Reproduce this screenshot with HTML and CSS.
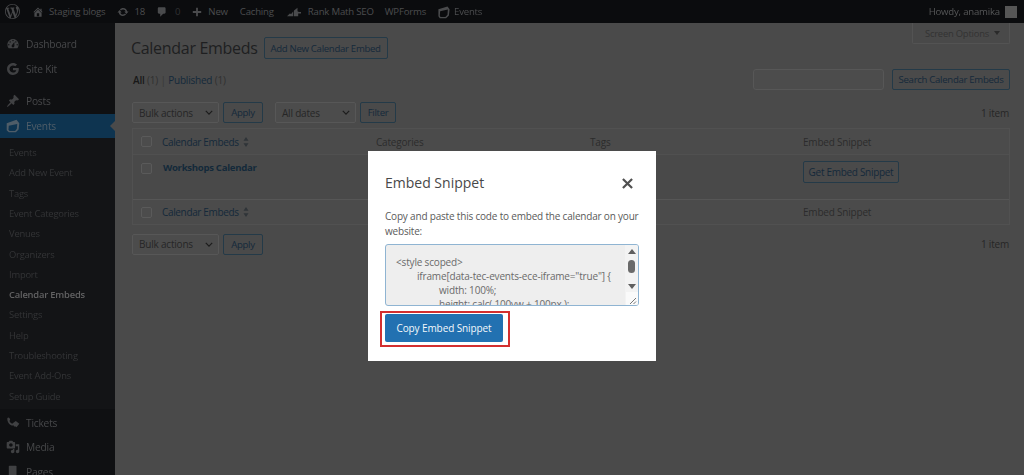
FILE: index.html
```html
<!DOCTYPE html>
<html lang="en">
<head>
<meta charset="utf-8">
<title>Calendar Embeds</title>
<link rel="stylesheet" href="styles.css">
</head>
<body>
<div class="page">
  <header class="adminbar">
    <div class="bar-left">
      <svg class="ab-logo" viewBox="0 0 20 20"><path d="M20 10c0-5.51-4.49-10-10-10C4.48 0 0 4.49 0 10c0 5.52 4.48 10 10 10 5.51 0 10-4.48 10-10zM7.78 15.37L4.37 6.22c.55-.02 1.17-.08 1.17-.08.5-.06.44-1.13-.06-1.11 0 0-1.45.11-2.37.11-.18 0-.37 0-.58-.01C4.12 2.69 6.87 1.11 10 1.11c2.33 0 4.45.87 6.05 2.34-.68-.11-1.65.39-1.65 1.58 0 .74.45 1.36.9 2.1.35.61.55 1.36.55 2.46 0 1.49-1.4 5-1.4 5l-3.03-8.37c.54-.02.82-.17.82-.17.5-.05.44-1.25-.06-1.22 0 0-1.44.12-2.38.12-.87 0-2.33-.12-2.33-.12-.5-.03-.56 1.2-.06 1.22l.92.08 1.26 3.41zM17.41 10c.24-.64.74-1.87.43-4.25.7 1.29 1.05 2.71 1.05 4.25 0 3.29-1.73 6.24-4.4 7.78.97-2.59 1.94-5.2 2.92-7.78zM6.1 18.09C3.12 16.65 1.11 13.53 1.11 10c0-1.3.23-2.48.72-3.59C3.25 10.3 4.67 14.2 6.1 18.09zm4.03-6.63l2.58 6.98c-.86.29-1.76.45-2.71.45-.79 0-1.57-.11-2.29-.33.81-2.38 1.62-4.74 2.42-7.1z"/></svg>
      <span class="ab-item ab-home"><svg class="ab-icon" viewBox="0 0 20 20"><path d="M16 8.5l1.53 1.53-1.06 1.06L10 4.62l-6.47 6.47-1.06-1.06L10 2.5l4 4v-2h2v4zm-6-2.46l6 5.99V18H4v-5.97zM12 17v-5H8v5h4z"/></svg>Staging blogs</span>
      <span class="ab-item ab-updates"><svg class="ab-icon" viewBox="0 0 20 20"><path d="M10.2 3.28c3.53 0 6.43 2.61 6.92 6h2.08l-3.5 4-3.5-4h2.32c-.45-1.97-2.21-3.45-4.32-3.45-1.45 0-2.73.71-3.54 1.78L4.95 5.66C6.23 4.2 8.11 3.28 10.2 3.28zm-.4 13.44c-3.52 0-6.43-2.61-6.92-6H.8l3.5-4c1.17 1.33 2.33 2.67 3.5 4H5.48c.45 1.97 2.21 3.45 4.32 3.45 1.45 0 2.73-.71 3.54-1.78l1.71 1.95c-1.28 1.46-3.15 2.38-5.25 2.38z"/></svg>18</span>
      <span class="ab-item ab-comments"><svg class="ab-icon" viewBox="0 0 20 20"><path d="M5 2h9c1.1 0 2 .9 2 2v7c0 1.1-.9 2-2 2h-2l-5 5v-5H5c-1.1 0-2-.9-2-2V4c0-1.1.9-2 2-2z"/></svg><span class="ab-dim">0</span></span>
      <span class="ab-item ab-new"><svg class="ab-icon" viewBox="0 0 20 20"><path d="M17 8.500v3h-5.500V17h-3v-5.500H3v-3h5.500V3h3v5.500z"/></svg>New</span>
      <span class="ab-item ab-caching">Caching</span>
      <span class="ab-item ab-rank"><svg class="ab-icon ab-icon-rank" viewBox="0 0 20 14"><path d="M0 13l4-4 2 1 3-4v7zM10 13V5l5-4v5l2 1h3v2h-4v4z"/></svg>Rank Math SEO</span>
      <span class="ab-item ab-wpforms">WPForms</span>
      <span class="ab-item ab-events"><svg class="ab-icon ab-icon-events" viewBox="0 0 20 20"><path fill-rule="evenodd" d="M2 6l13-4 3 4-1 9-4 4-9 0-2-3zM4.500 9l-.5 6.500 1 1.500 7 0 3-3 .5-7.500z"/></svg>Events</span>
    </div>
    <div class="bar-right">Howdy, anamika<span class="avatar"></span></div>
  </header>

  <div class="shell">
    <nav class="sidebar">
      <ul class="menu menu-top">
        <li class="m-item"><svg class="m-icon" viewBox="0 0 20 20"><path d="M3.76 16h12.48c1.1-1.37 1.76-3.11 1.76-5 0-4.42-3.58-8-8-8s-8 3.58-8 8c0 1.89.66 3.63 1.76 5zM10 4c.55 0 1 .45 1 1s-.45 1-1 1-1-.45-1-1 .45-1 1-1zM6 6c.55 0 1 .45 1 1s-.45 1-1 1-1-.45-1-1 .45-1 1-1zm8 0c.55 0 1 .45 1 1s-.45 1-1 1-1-.45-1-1 .45-1 1-1zm-5.370 5.550L12 7v6c0 1.100-.9 2-2 2s-2-.9-2-2c0-.57.24-1.080.63-1.450zM4 10c.55 0 1 .45 1 1s-.45 1-1 1-1-.45-1-1 .45-1 1-1zm12 0c.55 0 1 .45 1 1s-.45 1-1 1-1-.45-1-1 .45-1 1-1z"/></svg>Dashboard</li>
        <li class="m-item"><svg class="m-icon" viewBox="0 0 20 20"><path d="M18.300 10.200c0-.6-.05-1.200-.15-1.700H10v3.250h4.700c-.2 1.050-.8 2-1.700 2.600v2.150h2.750c1.600-1.500 2.550-3.650 2.550-6.300zM10 18.500c2.300 0 4.200-.75 5.750-2.050L13 14.350c-.75.5-1.750.8-3 .8-2.250 0-4.150-1.500-4.800-3.550H2.300v2.200C3.700 16.600 6.650 18.500 10 18.500zM5.200 11.600c-.35-1-.35-2.150 0-3.200V6.200H2.300c-1.150 2.350-1.150 5.250 0 7.600zM10 4.850c1.250 0 2.400.45 3.300 1.300l2.450-2.450C14.300 2.300 12.250 1.500 10 1.500 6.650 1.500 3.700 3.400 2.300 6.200l2.900 2.200C5.850 6.350 7.750 4.850 10 4.850z"/></svg>Site Kit</li>
      </ul>
      <ul class="menu menu-second">
        <li class="m-item"><svg class="m-icon" viewBox="0 0 20 20"><path d="M10.440 3.020l1.820-1.820 6.360 6.350-1.830 1.820c-1.050-.68-2.480-.57-3.410.36l-.75.75c-.92.93-1.040 2.350-.35 3.410l-1.830 1.820-2.410-2.410-2.800 2.790c-.42.42-3.380 2.710-3.800 2.290s1.860-3.390 2.280-3.810l2.790-2.790L4.100 9.360l1.830-1.820c1.050.69 2.480.57 3.400-.36l.75-.75c.93-.92 1.050-2.350.36-3.410z"/></svg>Posts</li>
        <li class="m-item m-current"><svg class="m-icon" viewBox="0 0 20 20"><path fill-rule="evenodd" d="M1 6l14-5 4 5-1 9-4 4-10 0-3-3zM4 9.500l-.5 6 1.500 1.500 8 0 2.500-3 .5-7z"/></svg>Events</li>
      </ul>
      <ul class="submenu">
        <li>Events</li>
        <li>Add New Event</li>
        <li>Tags</li>
        <li>Event Categories</li>
        <li>Venues</li>
        <li>Organizers</li>
        <li>Import</li>
        <li class="sub-current">Calendar Embeds</li>
        <li>Settings</li>
        <li>Help</li>
        <li>Troubleshooting</li>
        <li>Event Add-Ons</li>
        <li>Setup Guide</li>
      </ul>
      <ul class="menu menu-third">
        <li class="m-item"><svg class="m-icon" viewBox="0 0 20 20"><path d="M2 3c2-2 3 0 4 2l-1 2c1 2 2 3 4 4l1-1 1 2-2 2C5 13 1 8 2 3zM10 10l4-3 5 4-4 5c-1-1-2-1-3-1s-2-2-2-5z"/></svg>Tickets</li>
        <li class="m-item"><svg class="m-icon" viewBox="0 0 20 20"><path d="M13 11V4c0-.55-.45-1-1-1h-1.670L9 1H5L3.670 3H2c-.55 0-1 .45-1 1v7c0 .55.45 1 1 1h10c.55 0 1-.45 1-1zM7 4.500c1.380 0 2.500 1.120 2.500 2.500S8.380 9.500 7 9.500 4.500 8.380 4.500 7 5.620 4.500 7 4.500zM14 6h5v10.500c0 1.380-1.120 2.500-2.500 2.500S14 17.880 14 16.500s1.120-2.500 2.500-2.500c.17 0 .34.02.5.05V9h-3V6zm-4 8.050V13h2v3.500c0 1.380-1.120 2.500-2.500 2.500S7 17.880 7 16.500 8.120 14 9.500 14c.17 0 .34.02.5.05z"/></svg>Media</li>
        <li class="m-item"><svg class="m-icon" viewBox="0 0 20 20"><path d="M5 1h9a1 1 0 0 1 1 1v15a1 1 0 0 1-1 1H5a1 1 0 0 1-1-1V2a1 1 0 0 1 1-1z"/></svg>Pages</li>
      </ul>
    </nav>

    <main class="content">
      <div class="screen-options">Screen Options <span class="so-arrow"></span></div>
      <div class="title-row">
        <h1 class="title">Calendar Embeds</h1>
        <span class="btn btn-add">Add New Calendar Embed</span>
      </div>
      <div class="views-row">
        <div class="views"><b>All</b> <span class="count">(1)</span> <span class="sep">|</span> <a class="link">Published</a> <span class="count">(1)</span></div>
        <div class="search">
          <span class="search-input"></span>
          <span class="btn btn-search">Search Calendar Embeds</span>
        </div>
      </div>

      <div class="tablenav tablenav-top">
        <span class="select select-bulk">Bulk actions<svg class="chev" viewBox="0 0 10 6"><path d="M1 1l4 4 4-4"/></svg></span>
        <span class="btn btn-apply">Apply</span>
        <span class="select select-dates">All dates<svg class="chev" viewBox="0 0 10 6"><path d="M1 1l4 4 4-4"/></svg></span>
        <span class="btn btn-filter">Filter</span>
        <span class="items">1 item</span>
      </div>

      <div class="table">
        <div class="tr th">
          <span class="cb"></span>
          <span class="col-name"><a class="link link-head">Calendar Embeds</a><svg class="sort" viewBox="0 0 6 12"><path d="M3 0l3 4.500H0zM3 12L0 7.500h6z"/></svg></span>
          <span>Categories</span><span>Tags</span><span>Embed Snippet</span>
        </div>
        <div class="tr td">
          <span class="cb"></span>
          <span class="col-name"><a class="link strong">Workshops Calendar</a></span>
          <span></span><span></span>
          <span><span class="btn btn-get">Get Embed Snippet</span></span>
        </div>
        <div class="tr tf">
          <span class="cb"></span>
          <span class="col-name"><a class="link link-head">Calendar Embeds</a><svg class="sort" viewBox="0 0 6 12"><path d="M3 0l3 4.500H0zM3 12L0 7.500h6z"/></svg></span>
          <span></span><span></span><span>Embed Snippet</span>
        </div>
      </div>

      <div class="tablenav tablenav-bottom">
        <span class="select select-bulk">Bulk actions<svg class="chev" viewBox="0 0 10 6"><path d="M1 1l4 4 4-4"/></svg></span>
        <span class="btn btn-apply">Apply</span>
        <span class="items">1 item</span>
      </div>
    </main>
  </div>
</div>

<section class="modal">
  <div class="modal-head">
    <h2 class="modal-title">Embed Snippet</h2>
    <svg class="modal-close" viewBox="0 0 12 12"><path d="M1 1l10 10M11 1L1 11"/></svg>
  </div>
  <p class="modal-text">Copy and paste this code to embed the calendar on your website:</p>
  <div class="code">
    <pre class="code-text">&lt;style scoped&gt;
<span class="i1">iframe[data-tec-events-ece-iframe="true"] {</span>
<span class="i2">width: 100%;</span>
<span class="i2">height: calc( 100vw + 100px );</span></pre>
    <div class="scrollbar">
      <span class="sb-up"></span>
      <span class="sb-thumb"></span>
      <span class="sb-down"></span>
    </div>
    <svg class="grip" viewBox="0 0 12 13"><path d="M10 6l-6 6M10 9.500L7.500 12"/></svg>
  </div>
  <div class="highlight"><span class="btn-primary">Copy Embed Snippet</span></div>
</section>
</body>
</html>
```

FILE: styles.css
```css
* { box-sizing: border-box; }
html, body { margin: 0; padding: 0; }
body {
  width: 1024px;
  height: 475px;
  overflow: hidden;
  position: relative;
  font-family: "Open Sans", "Noto Sans", sans-serif;
  font-size: 9.6px;
  letter-spacing: -.2px;
  color: #2b2c2d;
  background: #0f1012;
}
ul { list-style: none; margin: 0; padding: 0; }
h1, h2, p { margin: 0; font-weight: 400; }

.page { filter: blur(.6px); width: 1024px; height: 475px; display: flex; flex-direction: column; overflow: hidden; }

/* admin bar */
.adminbar {
  height: 23px;
  flex: none;
  background: #0b0c0e;
  color: #4c4d4f;
  display: flex;
  justify-content: space-between;
  align-items: center;
  padding: 0 7px 0 5px;
}
.bar-left { display: flex; align-items: center; }
.bar-right { display: flex; align-items: center; gap: 5px; color: #565758; }
.ab-logo { width: 15px; height: 15px; fill: #47484a; margin-right: 12px; flex: none; }
.ab-item { display: flex; align-items: center; white-space: nowrap; }
.ab-icon { width: 12px; height: 12px; fill: #4a4b4d; margin-right: 5px; flex: none; }
.ab-icon-rank { width: 14px; height: 10px; margin-right: 7px; }
.ab-icon-events { width: 14px; height: 14px; margin-right: 3px; }
.ab-home { margin-right: 12px; }
.ab-updates { margin-right: 11px; }
.ab-comments { margin-right: 11px; }
.ab-new { margin-right: 12px; }
.ab-caching { margin-right: 13px; }
.ab-rank { margin-right: 11px; }
.ab-wpforms { margin-right: 11px; }
.ab-dim { color: #303133; margin-left: 2px; }
.avatar { width: 12px; height: 12px; background: #565656; }

/* layout */
.shell { flex: 1; display: flex; min-height: 0; }
.sidebar { width: 115px; flex: none; background: #0f1012; color: #47484a; overflow: hidden; }
.content { flex: 1; background: #4a4a4a; padding: 0 14px 0 16px; min-width: 0; }

/* sidebar */
.menu-top { padding-top: 9px; }
.menu-second { padding-top: 8.500px; }
.m-item { height: 24.4px; display: flex; align-items: center; padding-left: 6px; font-size: 10.200px; white-space: nowrap; }
.m-icon { width: 14px; height: 14px; fill: #404143; margin-right: 6px; flex: none; }
.m-current { background: #0e3450; color: #4f5d68; position: relative; }
.m-current .m-icon { fill: #4f5d68; }
.m-current::after {
  content: "";
  position: absolute;
  right: 0;
  top: 50%;
  margin-top: -5px;
  border: 5px solid transparent;
  border-left: 0;
  border-right-color: #4a4a4a;
}
.submenu { background: #131416; padding: 5px 0 2px; }
.submenu li { height: 20.3px; line-height: 20px; padding-left: 9px; font-size: 9.400px; color: #333436; white-space: nowrap; }
.submenu .sub-current { color: #626263; font-weight: 600; }
.menu-third { padding-top: 1.800px; }

/* content */
.screen-options {
  float: right;
  width: 98px;
  height: 21px;
  padding-left: 12px;
  display: flex;
  align-items: center;
  gap: 5px;
  background: #494949;
  border: 1px solid #535353;
  border-top: 0;
  border-radius: 0 0 2px 2px;
  font-size: 9.400px;
  color: #333;
}
.so-arrow { width: 0; height: 0; border: 3px solid transparent; border-bottom: 0; border-top: 4px solid #2a2a2a; }
.title-row { display: flex; align-items: center; gap: 6px; padding-top: 14px; }
.title { font-size: 16px; line-height: 22px; letter-spacing: -.3px; color: #1e1f21; }
.btn {
  display: inline-flex;
  align-items: center;
  justify-content: center;
  height: 21px;
  border: 1px solid #243a48;
  border-radius: 2px;
  background: #4a4a4a;
  color: #15293a;
  letter-spacing: -.3px;
  white-space: nowrap;
}
.btn-add { width: 124px; height: 22px; }
.views-row { clear: both; display: flex; justify-content: space-between; align-items: center; height: 21px; margin-top: 10px; }
.views { padding-left: 2px; color: #2e2e2e; font-size: 10px; }
.views b { font-weight: 600; color: #181818; }
.count { color: #303030; }
.sep { color: #383838; }
.link { color: #14293a; }
.link-head { letter-spacing: -.35px; }
.search { display: flex; gap: 8px; }
.search-input { width: 131px; height: 21px; background: #4c4c4c; border: 1px solid #575757; border-radius: 3px; }
.btn-search { width: 118px; }

.tablenav { display: flex; align-items: center; height: 21px; padding-left: 1px; }
.tablenav-top { margin-top: 12px; }
.tablenav-bottom { margin-top: 8.500px; }
.select {
  height: 21px;
  display: inline-flex;
  align-items: center;
  justify-content: space-between;
  padding: 0 5px 0 6px;
  background: #4c4c4c;
  border: 1px solid #575757;
  border-radius: 2px;
  font-size: 10px;
  color: #262626;
}
.select-bulk { width: 87px; }
.select-dates { width: 81px; margin-left: 12px; }
.chev { width: 8px; height: 5px; fill: none; stroke: #1c1c1c; stroke-width: 1.500; }
.btn-apply { width: 40px; margin-left: 4px; }
.btn-filter { width: 36px; margin-left: 4px; }
.items { margin-left: auto; color: #262626; padding-right: 1px; font-size: 10px; }

.table {
  margin: 5px 0 0 1px;
  border: 1px solid #515151;
  background: #4b4b4b;
  font-size: 10px;
  color: #2b2b2b;
}
.tr { display: grid; grid-template-columns: 29px 214px 214px 213px 1fr; align-items: center; }
.th { height: 26px; border-bottom: 1px solid #505050; }
.td { height: 44px; background: #494949; align-items: start; padding-top: 6px; }
.tf { height: 25px; border-top: 1px solid #565656; }
.cb { width: 11px; height: 11px; margin-left: 8px; background: #4c4c4c; border: 1px solid #5a5a5a; border-radius: 2px; }
.td .cb { margin-top: 2px; }
.col-name { display: flex; align-items: center; gap: 4px; }
.sort { width: 6px; height: 10px; fill: #2f3438; }
.strong { font-weight: 700; padding-left: 1px; font-size: 9.600px; letter-spacing: -.3px; }
.btn-get { width: 96px; height: 22px; }

/* modal */
.modal {
  position: absolute;
  left: 368px;
  top: 151px;
  width: 288px;
  height: 210px;
  background: #fff;
  padding: 21px 17px 0;
  color: #5a5a5a;
  letter-spacing: 0;
}
.modal-head { display: flex; justify-content: space-between; align-items: center; height: 22px; padding-right: 6px; }
.modal-title { font-size: 14px; line-height: 22px; color: #484848; }
.modal-close { width: 11px; height: 11px; fill: none; stroke: #505050; stroke-width: 2.400; }
.modal-text { margin-top: 15px; font-size: 10px; letter-spacing: -.19px; line-height: 15px; }
.code {
  position: relative;
  height: 62px;
  margin-top: 5px;
  overflow: hidden;
  border: 1px solid #8fb4d2;
  border-radius: 3px;
  background: #eeeeee;
}
.code-text {
  margin: 0;
  padding: 10px 0 0 10px;
  font-family: "Open Sans", sans-serif;
  font-size: 10px;
  letter-spacing: -.17px;
  line-height: 14px;
  color: #6a6a6a;
}
.i1 { padding-left: 21px; }
.i2 { padding-left: 43px; }
.scrollbar {
  position: absolute;
  top: 0;
  right: 0;
  bottom: 0;
  width: 13px;
  background: #f3f3f3;
  display: flex;
  flex-direction: column;
  align-items: center;
  padding-top: 4px;
}
.sb-up { width: 0; height: 0; border: 4px solid transparent; border-top: 0; border-bottom: 5px solid #5f5f5f; }
.sb-thumb { width: 7px; height: 13px; margin-top: 6px; border-radius: 4px; background: #6a6a6a; }
.sb-down { width: 0; height: 0; margin-top: 11px; border: 4px solid transparent; border-bottom: 0; border-top: 5px solid #5f5f5f; }
.grip { position: absolute; right: 0; bottom: 0; width: 12px; height: 13px; fill: none; stroke: #777; stroke-width: 1; background: #fafafa; }
.highlight {
  display: inline-block;
  margin: 5px 0 0 -5.500px;
  padding: 1px 5px 3px 3.500px;
  border: 2px solid #d32f2f;
}
.btn-primary {
  display: flex;
  align-items: center;
  justify-content: center;
  width: 118px;
  height: 28px;
  background: #2271b1;
  border-radius: 2px;
  color: #f4f8fb;
  font-size: 10px;
  letter-spacing: -.1px;
  font-weight: 500;
}
```
